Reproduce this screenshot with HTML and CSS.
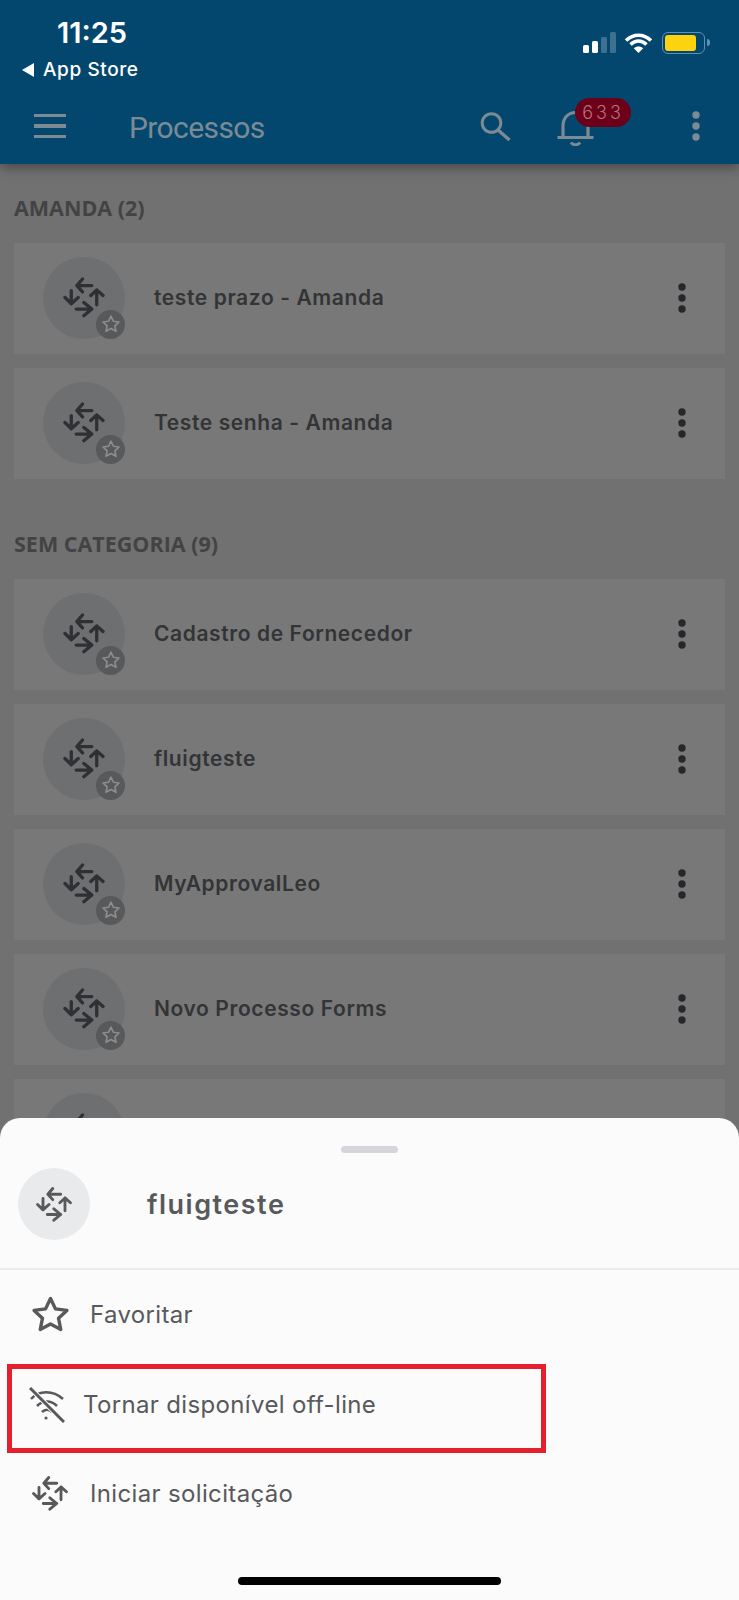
FILE: index.html
```html
<!DOCTYPE html>
<html>
<head>
  <meta charset="UTF-8">
  <link rel="stylesheet" href="styles.css">
</head>
<body>
  <svg class="sprites" width="0" height="0">
    <symbol id="arrows" viewBox="0 0 133 122">
      <path d="M45 25H90M62 5L45 25L62 44M105 83V38M87 55L105 38L124 55M43 96H90M66 76L90 96L66 116M28 40V80M9 61L28 80L49 61" fill="none" stroke="currentColor" stroke-width="10" stroke-linecap="round" stroke-linejoin="round"/>
    </symbol>
    <symbol id="star" viewBox="0 0 24 24">
      <path d="M12 2.6l2.9 6.1 6.7.9-4.9 4.6 1.3 6.6-6-3.3-6 3.3 1.3-6.6-4.9-4.6 6.7-.9z" fill="none" stroke="currentColor" stroke-width="2" stroke-linejoin="round"/>
    </symbol>
    <symbol id="kebab" viewBox="0 0 8 30">
      <circle cx="4" cy="4" r="3.7" fill="currentColor"/>
      <circle cx="4" cy="15" r="3.7" fill="currentColor"/>
      <circle cx="4" cy="26" r="3.7" fill="currentColor"/>
    </symbol>
  </svg>

  <header class="header">
    <div class="status-bar">
      <div class="status-left">
        <div class="clock">11:25</div>
        <div class="back-app"><span class="back-arrow"></span>App Store</div>
      </div>
      <div class="status-right">
        <svg width="33" height="21" viewBox="0 0 33 21">
          <rect x="0" y="13" width="6" height="8" rx="1.5" fill="#fff"/>
          <rect x="9" y="9" width="6" height="12" rx="1.5" fill="#fff"/>
          <rect x="18" y="5" width="6" height="16" rx="1.5" fill="#40708f"/>
          <rect x="27" y="0" width="6" height="21" rx="1.5" fill="#40708f"/>
        </svg>
        <svg width="29" height="21" viewBox="0 0 29 21">
          <path d="M2 8.500C9.500 1.500 19.500 1.500 27 8.500M6.500 12.500C11.500 8 17.500 8 22.500 12.500" fill="none" stroke="#fff" stroke-width="3.600"/>
          <path d="M14.500 21L9.800 16.200C12.500 13.800 16.500 13.800 19.200 16.200z" fill="#fff"/>
        </svg>
        <div class="battery"><span class="battery-fill"></span></div>
      </div>
    </div>
    <div class="toolbar">
      <div class="menu-icon"><span></span><span></span><span></span></div>
      <div class="page-title">Processos</div>
      <svg class="search-icon" width="31" height="29" viewBox="0 0 31 29">
        <circle cx="11.500" cy="11" r="9.300" fill="none" stroke="currentColor" stroke-width="3"/>
        <path d="M18 18L29.500 28" stroke="currentColor" stroke-width="3.400"/>
      </svg>
      <div class="bell">
        <svg width="37" height="37" viewBox="0 0 37 37">
          <path d="M6 28V17C6 9 11 3.500 19 3.500S31 9 31 17V28M0.500 28.500H36.500" fill="none" stroke="currentColor" stroke-width="3.200"/>
          <path d="M14 33.500C16 36.500 21 36.500 23 33.500" fill="none" stroke="currentColor" stroke-width="3"/>
        </svg>
        <span class="badge">633</span>
      </div>
      <svg class="toolbar-kebab" width="8" height="30"><use href="#kebab"/></svg>
    </div>
  </header>

  <main class="content">
    <h2 class="group-label">AMANDA (2)</h2>
    <div class="card-list">
      <div class="card">
        <div class="avatar">
          <svg class="arrows" width="44" height="41"><use href="#arrows"/></svg>
          <span class="fav-badge"><svg width="20" height="20"><use href="#star"/></svg></span>
        </div>
        <div class="card-name">teste prazo - Amanda</div>
        <svg class="card-kebab" width="8" height="30"><use href="#kebab"/></svg>
      </div>
      <div class="card">
        <div class="avatar">
          <svg class="arrows" width="44" height="41"><use href="#arrows"/></svg>
          <span class="fav-badge"><svg width="20" height="20"><use href="#star"/></svg></span>
        </div>
        <div class="card-name">Teste senha - Amanda</div>
        <svg class="card-kebab" width="8" height="30"><use href="#kebab"/></svg>
      </div>
    </div>

    <h2 class="group-label second">SEM CATEGORIA (9)</h2>
    <div class="card-list">
      <div class="card">
        <div class="avatar">
          <svg class="arrows" width="44" height="41"><use href="#arrows"/></svg>
          <span class="fav-badge"><svg width="20" height="20"><use href="#star"/></svg></span>
        </div>
        <div class="card-name">Cadastro de Fornecedor</div>
        <svg class="card-kebab" width="8" height="30"><use href="#kebab"/></svg>
      </div>
      <div class="card">
        <div class="avatar">
          <svg class="arrows" width="44" height="41"><use href="#arrows"/></svg>
          <span class="fav-badge"><svg width="20" height="20"><use href="#star"/></svg></span>
        </div>
        <div class="card-name">fluigteste</div>
        <svg class="card-kebab" width="8" height="30"><use href="#kebab"/></svg>
      </div>
      <div class="card">
        <div class="avatar">
          <svg class="arrows" width="44" height="41"><use href="#arrows"/></svg>
          <span class="fav-badge"><svg width="20" height="20"><use href="#star"/></svg></span>
        </div>
        <div class="card-name">MyApprovalLeo</div>
        <svg class="card-kebab" width="8" height="30"><use href="#kebab"/></svg>
      </div>
      <div class="card">
        <div class="avatar">
          <svg class="arrows" width="44" height="41"><use href="#arrows"/></svg>
          <span class="fav-badge"><svg width="20" height="20"><use href="#star"/></svg></span>
        </div>
        <div class="card-name">Novo Processo Forms</div>
        <svg class="card-kebab" width="8" height="30"><use href="#kebab"/></svg>
      </div>
      <div class="card">
        <div class="avatar">
          <svg class="arrows" width="44" height="41"><use href="#arrows"/></svg>
        </div>
      </div>
    </div>
  </main>

  <section class="sheet">
    <div class="sheet-handle"></div>
    <div class="sheet-head">
      <div class="sheet-avatar"><svg width="38" height="35"><use href="#arrows"/></svg></div>
      <div class="sheet-title">fluigteste</div>
    </div>
    <div class="sheet-row">
      <svg class="row-icon" width="41" height="41"><use href="#star"/></svg>
      <span>Favoritar</span>
    </div>
    <div class="sheet-row highlighted">
      <svg class="row-icon" width="36" height="36" viewBox="0 0 36 36">
        <path d="M2 12C10 3 24 3 34 12M8 19C14 13 22 13 28 19M13 25C16 22 20 22 23 25" fill="none" stroke="currentColor" stroke-width="2.600"/>
        <path d="M1 1L35 35" stroke="#fbfbfb" stroke-width="5"/>
        <path d="M1 1L35 35" stroke="currentColor" stroke-width="3"/>
        <circle cx="17" cy="31" r="1.600" fill="currentColor"/>
      </svg>
      <span>Tornar disponível off-line</span>
    </div>
    <div class="sheet-row last">
      <svg class="row-icon" width="38" height="35"><use href="#arrows"/></svg>
      <span>Iniciar solicitação</span>
    </div>
    <div class="home-bar"></div>
  </section>
</body>
</html>
```

FILE: styles.css
```css
* {
  box-sizing: border-box;
}

html,
body {
  margin: 0;
  padding: 0;
}

body {
  position: relative;
  width: 739px;
  height: 1600px;
  overflow: hidden;
  background: #717171;
  font-family: Inter, "Noto Sans", sans-serif;
}

.sprites {
  position: absolute;
}

/* header */
.header {
  position: relative;
  z-index: 1;
  height: 164px;
  background: #04476e;
  box-shadow: 0 3px 12px rgba(0,0,0,0.4);
}

.status-bar {
  display: flex;
  justify-content: space-between;
  height: 92px;
  padding: 32px 34px 0 22px;
}

.status-left {
  margin-top: -16px;
}

.clock {
  margin-left: 35px;
  font-size: 29px;
  line-height: 34px;
  font-weight: 600;
  color: #fff;
}

.back-app {
  display: flex;
  align-items: center;
  margin-top: 2px;
  font-size: 19px;
  line-height: 35px;
  font-weight: 500;
  color: #fff;
  letter-spacing: 0.6px;
}

.back-arrow {
  width: 0;
  height: 0;
  margin-right: 9px;
  border-top: 7px solid transparent;
  border-bottom: 7px solid transparent;
  border-right: 12px solid #fff;
}

.status-right {
  display: flex;
  align-items: flex-start;
  gap: 8px;
}

.battery {
  position: relative;
  width: 43px;
  height: 22px;
  margin-left: 1px;
  padding: 2px;
  border: 1.5px solid #5d90b4;
  border-radius: 6px;
}

.battery::after {
  content: "";
  position: absolute;
  right: -6px;
  top: 6px;
  width: 3px;
  height: 7px;
  background: #5d90b4;
  border-radius: 0 3px 3px 0;
}

.battery-fill {
  display: block;
  width: 31px;
  height: 100%;
  background: #fdd20e;
  border-radius: 3px;
}

.toolbar {
  display: flex;
  align-items: center;
  height: 72px;
  padding: 0 0 4px 34px;
  color: #7c8a94;
}

.menu-icon {
  display: flex;
  flex-direction: column;
  gap: 7px;
  width: 32px;
}

.menu-icon span {
  display: block;
  height: 3.500px;
  background: #7c8a94;
}

.page-title {
  width: 351px;
  margin-left: 63px;
  margin-top: 2px;
  font-family: Roboto, sans-serif;
  font-size: 30px;
  font-weight: 400;
  letter-spacing: -0.6px;
}

.bell {
  position: relative;
  width: 37px;
  height: 37px;
  margin-left: 46px;
  margin-top: 2px;
}

.badge {
  position: absolute;
  left: 18px;
  top: -11px;
  width: 56px;
  height: 29px;
  border-radius: 15px;
  background: #6b0018;
  color: #b5727f;
  font-size: 18px;
  font-weight: 300;
  line-height: 29px;
  letter-spacing: 3px;
  text-align: center;
}

.toolbar-kebab {
  margin-left: 98px;
}

/* list */
.content {
  padding: 0 14px;
}

.group-label {
  margin: 30px 0 21px;
  font-family: "Open Sans", sans-serif;
  font-size: 21.5px;
  font-weight: 700;
  line-height: 28px;
  color: #434343;
}

.group-label.second {
  margin-top: 51px;
}

.card-list {
  display: flex;
  flex-direction: column;
  gap: 14px;
}

.card {
  display: flex;
  align-items: center;
  height: 111px;
  padding-left: 29px;
  background: #787878;
}

.avatar {
  position: relative;
  display: flex;
  align-items: center;
  justify-content: center;
  flex: none;
  width: 82px;
  height: 82px;
  margin-top: -2px;
  border-radius: 50%;
  background: #6e6f71;
  color: #2f3033;
}

.fav-badge {
  position: absolute;
  right: 0;
  bottom: 0;
  display: flex;
  align-items: center;
  justify-content: center;
  width: 29px;
  height: 29px;
  border-radius: 50%;
  background: #58595b;
  color: #8d8d8d;
}

.card-name {
  flex: 1;
  margin-left: 29px;
  margin-top: -2px;
  font-size: 21px;
  font-weight: 600;
  letter-spacing: 0.6px;
  color: #333436;
}

.card-kebab {
  margin-right: 39px;
  margin-top: -1px;
  color: #26272a;
}

/* bottom sheet */
.sheet {
  position: absolute;
  left: 0;
  right: 0;
  top: 1118px;
  bottom: 0;
  z-index: 2;
  background: #fbfbfb;
  border-radius: 20px 20px 0 0;
  color: #58595b;
}

.sheet-handle {
  width: 57px;
  height: 7px;
  margin: 28px auto 0;
  background: #d5d6da;
  border-radius: 4px;
}

.sheet-head {
  display: flex;
  align-items: center;
  height: 117px;
  padding: 0 0 13px 18px;
  border-bottom: 2px solid #ebebeb;
}

.sheet-avatar {
  display: flex;
  align-items: center;
  justify-content: center;
  width: 72px;
  height: 72px;
  border-radius: 50%;
  background: #e9eaec;
}

.sheet-title {
  margin-left: 57px;
  font-size: 27px;
  font-weight: 600;
  letter-spacing: 1.5px;
}

.sheet-row {
  display: flex;
  align-items: center;
  gap: 19px;
  height: 89px;
  padding-left: 30px;
  font-size: 24px;
  letter-spacing: 0.35px;
}

.sheet-row.highlighted {
  gap: 18px;
  width: 539px;
  height: 89px;
  margin: 5px 0 0 7px;
  padding: 0 0 8px 17px;
  border: 5px solid #e4202c;
}

.sheet-row.last {
  height: 80px;
  gap: 21px;
  padding-left: 31px;
}

.row-icon {
  flex: none;
}

.home-bar {
  position: absolute;
  left: 238px;
  bottom: 15px;
  width: 263px;
  height: 8px;
  border-radius: 4px;
  background: #000;
}
```
